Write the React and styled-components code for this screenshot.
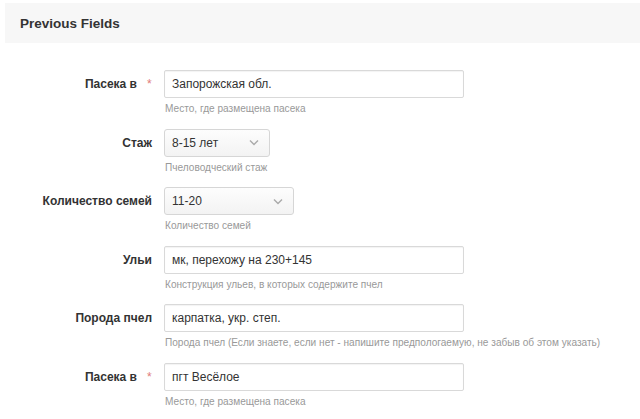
import React from 'react';
import styled, { createGlobalStyle } from 'styled-components';

const GlobalStyle = createGlobalStyle`
  body {
    margin: 0;
    background: #fff;
    font-family: 'Liberation Sans', Arial, sans-serif;
    color: #333;
  }
`;

const Page = styled.div`
  padding: 3px 0 0 5px;
`;

const Header = styled.div`
  background: #f7f7f7;
  height: 40px;
  display: flex;
  align-items: center;
  padding-left: 15px;
  font-size: 13.5px;
  font-weight: bold;
  color: #333;
`;

const Form = styled.form`
  padding-top: 27px;
  display: flex;
  flex-direction: column;
  gap: 13.6px;
`;

const Row = styled.div`
  display: grid;
  grid-template-columns: 147px 1fr;
  column-gap: 12px;
`;

const Label = styled.label`
  display: flex;
  justify-content: flex-end;
  align-items: flex-start;
  padding-top: 7px;
  font-size: 12px;
  line-height: 14px;
  font-weight: bold;
  color: #333;
  white-space: nowrap;
`;

const Star = styled.span`
  color: #e07a7a;
  font-weight: normal;
  margin-left: 10px;
  width: 5px;
`;

const Control = styled.div`
  display: flex;
  flex-direction: column;
  align-items: flex-start;
`;

const TextInput = styled.input`
  box-sizing: border-box;
  width: 300px;
  height: 28px;
  padding: 0 7px;
  border: 1px solid #d9d9d9;
  border-radius: 2px;
  box-shadow: inset 0 1px 1px rgba(0, 0, 0, 0.05);
  font-family: inherit;
  font-size: 12px;
  color: #333;
  background: #fff;
  outline: none;
`;

const SelectBox = styled.div`
  box-sizing: border-box;
  width: ${(p) => p.$width}px;
  height: 28px;
  padding: 0 10px 0 7px;
  border: 1px solid #d6d6d6;
  border-radius: 3px;
  background: linear-gradient(#fdfdfd, #f3f3f3);
  display: flex;
  align-items: center;
  justify-content: space-between;
  font-size: 12px;
  color: #333;
`;

const Help = styled.div`
  margin-top: 4px;
  font-size: 10.1px;
  line-height: 13px;
  color: #999;
  padding-left: 1px;
`;

const Chevron = () => (
  <svg width="10" height="7" viewBox="0 0 10 7">
    <polyline points="1,1.5 5,5.5 9,1.5" fill="none" stroke="#aaa" strokeWidth="1.4" />
  </svg>
);

const fields = [
  { label: 'Пасека в', required: true, value: 'Запорожская обл.', help: 'Место, где размещена пасека' },
  { label: 'Стаж', select: 106, value: '8-15 лет', help: 'Пчеловодческий стаж' },
  { label: 'Количество семей', select: 130, value: '11-20', help: 'Количество семей' },
  { label: 'Ульи', value: 'мк, перехожу на 230+145', help: 'Конструкция ульев, в которых содержите пчел' },
  {
    label: 'Порода пчел',
    value: 'карпатка, укр. степ.',
    help: 'Порода пчел (Если знаете, если нет - напишите предпологаемую, не забыв об этом указать)',
  },
  { label: 'Пасека в', required: true, value: 'пгт Весёлое', help: 'Место, где размещена пасека' },
];

export default function App() {
  return (
    <Page>
      <GlobalStyle />
      <Header>Previous Fields</Header>
      <Form>
        {fields.map((f, i) => (
          <Row key={i}>
            <Label>
              {f.label}
              {f.required && <Star>*</Star>}
            </Label>
            <Control>
              {f.select ? (
                <SelectBox $width={f.select}>
                  <span>{f.value}</span>
                  <Chevron />
                </SelectBox>
              ) : (
                <TextInput defaultValue={f.value} />
              )}
              <Help>{f.help}</Help>
            </Control>
          </Row>
        ))}
      </Form>
    </Page>
  );
}
